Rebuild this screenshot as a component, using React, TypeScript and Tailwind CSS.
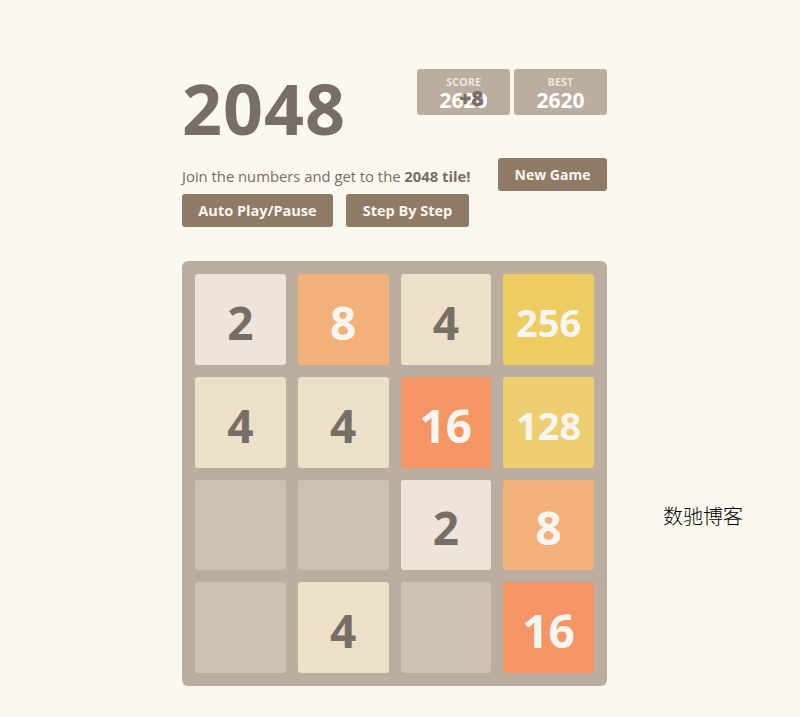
import React from "react";

const board: (number | null)[][] = [
  [2, 8, 4, 256],
  [4, 4, 16, 128],
  [null, null, 2, 8],
  [null, 4, null, 16],
];

function tileClass(v: number | null): string {
  switch (v) {
    case 2:
      return "bg-[#eee4da] text-[#776e65] text-[46px]";
    case 4:
      return "bg-[#ede0c8] text-[#776e65] text-[46px]";
    case 8:
      return "bg-[#f2b179] text-[#f9f6f2] text-[46px]";
    case 16:
      return "bg-[#f59563] text-[#f9f6f2] text-[46px]";
    case 128:
      return "bg-[#edcf72] text-[#f9f6f2] text-[38px]";
    case 256:
      return "bg-[#edcc61] text-[#f9f6f2] text-[38px]";
    default:
      return "bg-[#cdc1b4]";
  }
}

export default function App() {
  return (
    <div
      className="relative min-h-[717px] w-full bg-[#faf8ef] text-[#776e65]"
      style={{ fontFamily: '"Open Sans", "Noto Sans", Arial, sans-serif' }}
    >
      <div className="ml-[182px] w-[425px] pt-[69px]">
        <div className="flex items-start justify-between">
          <h1 className="mt-[4px] text-[70px] font-bold leading-none tracking-[1px] text-[#776e65]">
            2048
          </h1>
          <div className="flex gap-[4px]">
            <div className="relative flex h-[46px] w-[93px] flex-col items-center rounded-[3px] bg-[#bbada0] pt-[6px]">
              <div className="text-[11px] font-bold leading-[14px] text-[#eee4da]">SCORE</div>
              <div className="text-[21px] font-bold leading-[22px] text-white">2620</div>
              <div className="absolute left-[42px] top-[18px] text-[21px] font-extrabold leading-[22px] text-[#776e65]">
                +8
              </div>
            </div>
            <div className="flex h-[46px] w-[93px] flex-col items-center rounded-[3px] bg-[#bbada0] pt-[6px]">
              <div className="text-[11px] font-bold leading-[14px] text-[#eee4da]">BEST</div>
              <div className="text-[21px] font-bold leading-[22px] text-white">2620</div>
            </div>
          </div>
        </div>

        <div className="mt-[15px] flex items-center justify-between">
          <p className="pt-[2px] text-[14.8px] leading-[20px] text-[#776e65]">
            Join the numbers and get to the <strong className="font-bold">2048 tile!</strong>
          </p>
          <button className="h-[33px] w-[109px] rounded-[3px] bg-[#8f7a66] text-[14px] font-bold text-[#f9f6f2]">
            New Game
          </button>
        </div>

        <div className="mt-[3px] flex gap-[13px]">
          <button className="h-[33px] w-[151px] rounded-[3px] bg-[#8f7a66] text-[14.5px] font-bold text-[#f9f6f2]">
            Auto Play/Pause
          </button>
          <button className="h-[33px] w-[123px] rounded-[3px] bg-[#8f7a66] text-[14.5px] font-bold text-[#f9f6f2]">
            Step By Step
          </button>
        </div>

        <div className="mt-[34px] grid h-[425px] w-[425px] grid-cols-4 grid-rows-4 gap-[12px] rounded-[6px] bg-[#bbada0] p-[13px]">
          {board.flat().map((v, i) => (
            <div
              key={i}
              className={`flex items-center justify-center rounded-[3px] pt-[5px] font-bold leading-none ${tileClass(v)}`}
            >
              {v ?? ""}
            </div>
          ))}
        </div>
      </div>

      <div
        className="absolute left-[663px] top-[501px] text-[20px] font-light text-black"
        style={{ fontFamily: '"Noto Sans CJK SC", sans-serif' }}
      >
        数驰博客
      </div>
    </div>
  );
}
